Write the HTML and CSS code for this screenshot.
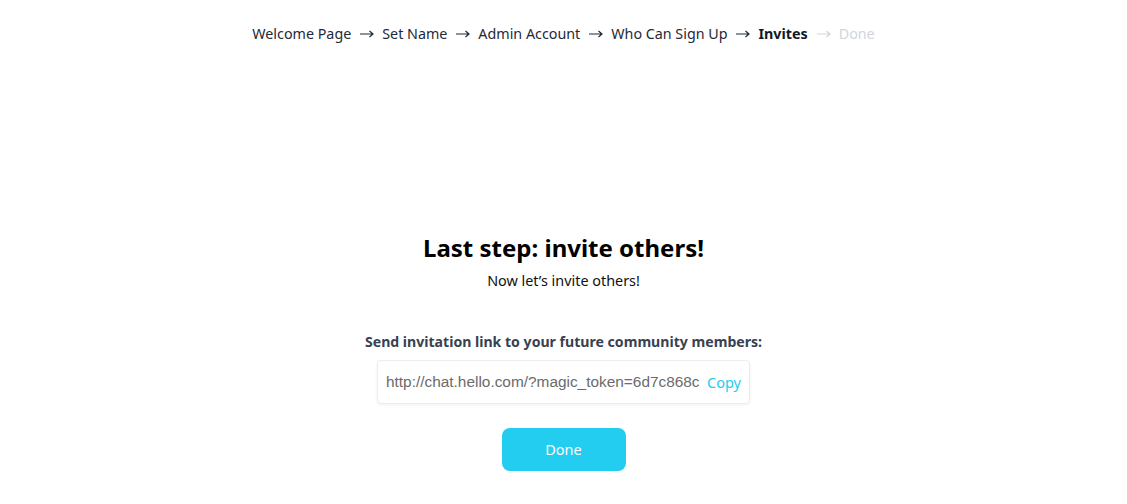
FILE: index.html
```html
<!DOCTYPE html>
<html>
<head>
<meta charset="utf-8">
<link rel="stylesheet" href="styles.css">
</head>
<body>
<div class="page">
  <nav class="steps">
    <span class="step">Welcome Page</span>
    <svg class="arrow" viewBox="0 0 14 8" width="14" height="8"><path d="M0 4H13M9.5 1L13 4L9.5 7" fill="none" stroke="currentColor" stroke-width="1.2"/></svg>
    <span class="step">Set Name</span>
    <svg class="arrow" viewBox="0 0 14 8" width="14" height="8"><path d="M0 4H13M9.5 1L13 4L9.5 7" fill="none" stroke="currentColor" stroke-width="1.2"/></svg>
    <span class="step">Admin Account</span>
    <svg class="arrow" viewBox="0 0 14 8" width="14" height="8"><path d="M0 4H13M9.5 1L13 4L9.5 7" fill="none" stroke="currentColor" stroke-width="1.2"/></svg>
    <span class="step">Who Can Sign Up</span>
    <svg class="arrow" viewBox="0 0 14 8" width="14" height="8"><path d="M0 4H13M9.5 1L13 4L9.5 7" fill="none" stroke="currentColor" stroke-width="1.2"/></svg>
    <span class="step current">Invites</span>
    <svg class="arrow future" viewBox="0 0 14 8" width="14" height="8"><path d="M0 4H13M9.5 1L13 4L9.5 7" fill="none" stroke="currentColor" stroke-width="1.2"/></svg>
    <span class="step future">Done</span>
  </nav>
  <main class="content">
    <h1 class="title">Last step: invite others!</h1>
    <p class="subtitle">Now let’s invite others!</p>
    <p class="label">Send invitation link to your future community members:</p>
    <div class="linkbox">
      <input class="url" type="text" readonly value="http://chat.hello.com/?magic_token=6d7c868c3f0a41b2">
      <span class="copy">Copy</span>
    </div>
    <button class="done">Done</button>
  </main>
</div>
</body>
</html>
```
FILE: styles.css
```css
html, body { margin: 0; padding: 0; background: #fff; }
body { font-family: "Noto Sans", "Open Sans", sans-serif; color: #1f2329; }
.page { display: flex; flex-direction: column; align-items: center; }
.steps {
  display: flex; align-items: center;
  margin-top: 21px; height: 24px;
  font-size: 14.3px; color: #1f2937;
}
.step { white-space: nowrap; }
.arrow { margin: 1px 8px 0 9px; color: #1f2937; }
.current { font-weight: 700; color: #111827; }
.future { color: #d1d5db; }
.content { display: flex; flex-direction: column; align-items: center; margin-top: 187px; }
.title { margin: 0; font-size: 24px; font-weight: 700; color: #000; line-height: 32px; }
.subtitle { margin: 6px 0 0; font-size: 14.4px; line-height: 22px; color: #111; }
.label { margin: 39px 0 0; font-size: 14.1px; line-height: 22px; font-weight: 700; color: #374151; }
.linkbox {
  margin-top: 7px; width: 373px; height: 44px; box-sizing: border-box;
  border: 1px solid #ececec; border-radius: 4px; box-shadow: 0 1px 3px rgba(0,0,0,0.06);
  display: flex; align-items: center; padding: 0 8px; gap: 8px;
}
.url {
  flex: 1; min-width: 0; border: none; outline: none; padding: 0; background: transparent;
  font-family: "Liberation Sans", Arial, sans-serif; font-size: 15.4px; color: #6b6b6b;
}
.copy { font-size: 14.5px; color: #22cdef; }
.done {
  margin-top: 24px; width: 124px; height: 43px; border: none; border-radius: 8px;
  background: #22cdef; color: #fff; font-family: "Noto Sans", sans-serif; font-size: 14.5px;
  padding: 0 0 2px;
}
```
